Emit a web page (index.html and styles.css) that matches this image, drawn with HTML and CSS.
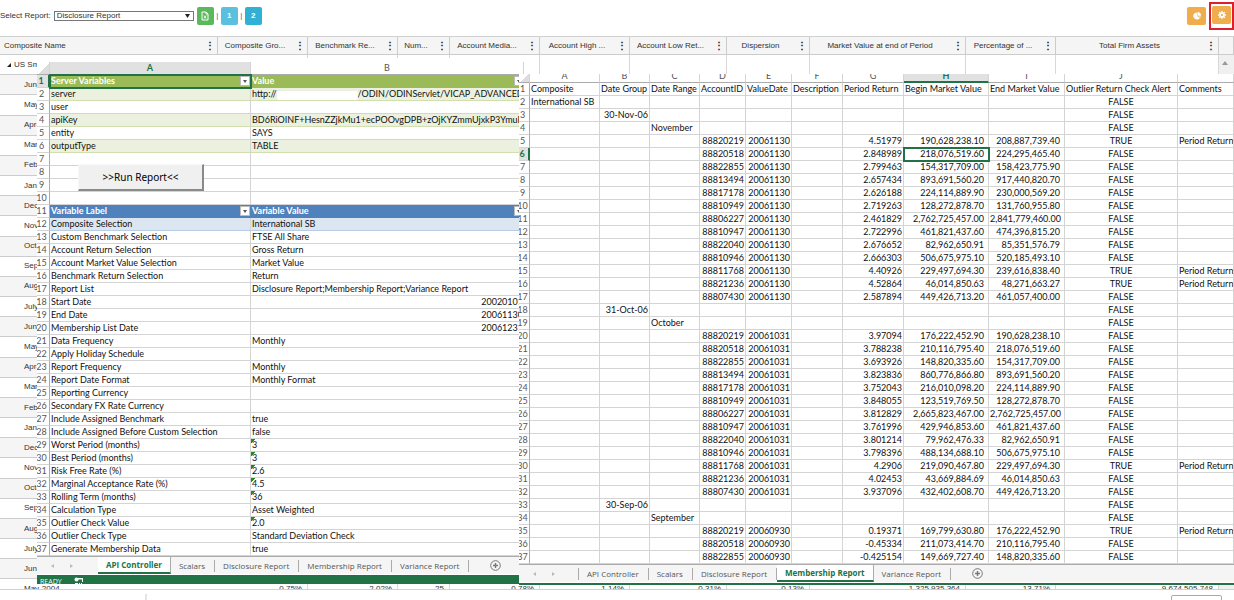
FILE: index.html
```html
<!DOCTYPE html>
<html lang="en">
  <head>
    <meta charset="UTF-8" />
    <meta name="viewport" content="width=device-width, initial-scale=1.0" />
    <title>Disclosure Report</title>
    <link rel="stylesheet" href="styles.css">
  </head>
  <body>
    <header class="toolbar">
      <div class="toolbar-group">
        <label for="report-select">Select Report:</label>
        <select id="report-select" class="report-select">
          <option>Disclosure Report</option>
        </select>
        <button class="button button-green" aria-label="Export to Excel">
          <svg width="8" height="10" viewBox="0 0 8 10" fill="none" stroke="#fff"><path d="M1 1h4l2 2v6H1z" /><path d="M5 1v2h2M3 4.5l2 3M5 4.5l-2 3" stroke-width=".9" /></svg>
        </button>
        <span class="divider">|</span>
        <button class="button button-light">1</button>
        <span class="divider">|</span>
        <button class="button button-blue">2</button>
      </div>
      <div class="toolbar-group">
        <button class="button button-orange" aria-label="Charts">
          <svg width="8" height="8" viewBox="0 0 8 8" fill="#fff"><path d="M3.6 .4A3.6 3.6 0 1 0 6.9 6L4.2 4.3z" /><path d="M4.4 0v3.7H8A3.7 3.7 0 0 0 4.4 0zM4.9 4.5l2.4 1.3a3.6 3.6 0 0 0 .5-1.3z" /></svg>
        </button>
        <span class="highlight">
          <button class="button button-orange" aria-label="Settings">
            <svg width="8" height="8" viewBox="0 0 8 8"><circle cx="4" cy="4" r="2" fill="none" stroke="#fff" stroke-width="1.8" /><path d="M4 0v1.4M4 6.6V8M0 4h1.4M6.6 4H8M1.2 1.2l1 1M5.8 5.8l1 1M6.8 1.2l-1 1M2.2 5.8l-1 1" stroke="#fff" stroke-width="1.3" /></svg>
          </button>
        </span>
      </div>
    </header>

    <main class="report">
      <div class="report-grid">
        <table class="report-table">
          <colgroup>
            <col class="w-name"><col class="w-90"><col class="w-90"><col class="w-num"><col class="w-90"><col class="w-90">
            <col class="w-low"><col class="w-disp"><col class="w-market"><col class="w-90"><col><col class="w-scroll">
          </colgroup>
          <thead>
            <tr id="report-head"></tr>
          </thead>
          <tbody id="report-body"></tbody>
        </table>
      </div>

      <section class="sheet sheet-controller">
        <div class="sheet-scroll">
          <table class="cells controller-table">
            <colgroup><col class="c-index"><col class="c-label"><col class="c-value"><col></colgroup>
            <thead>
              <tr><th class="corner"></th><th class="selected-col">A</th><th>B</th><th></th></tr>
            </thead>
            <tbody id="controller-body"></tbody>
          </table>
          <button class="run-button">&gt;&gt;Run Report&lt;&lt;</button>
        </div>
        <nav class="tabs">
          <span class="tab-arrows"><i class="arrow-left"></i><i class="arrow-right"></i></span>
          <a href="#" class="tab tab-active">API Controller</a>
          <a href="#" class="tab">Scalars</a>
          <a href="#" class="tab">Disclosure Report</a>
          <a href="#" class="tab">Membership Report</a>
          <a href="#" class="tab">Variance Report</a>
          <button class="add-tab" aria-label="New sheet">
            <svg width="11" height="11" viewBox="0 0 11 11" fill="none" stroke="#777"><circle cx="5.5" cy="5.5" r="4.8" /><path d="M5.5 3v5M3 5.5h5" stroke-width="1.4" /></svg>
          </button>
        </nav>
        <div class="status">
          <span>READY</span>
          <svg width="10" height="9" viewBox="0 0 10 9" fill="#fff"><circle cx="2.5" cy="2.5" r="2" /><path d="M4 1h5v4H8V2.4H4zM1 6h3v3H1zM5 6h1v1H5zM7 6h1v1H7z" /></svg>
        </div>
      </section>

      <section class="sheet sheet-membership">
        <div class="sheet-scroll">
          <table class="cells membership-table">
            <colgroup>
              <col class="m-index"><col class="m-a"><col class="m-b"><col class="m-b"><col class="m-d"><col class="m-d">
              <col class="m-f"><col class="m-g"><col class="m-h"><col class="m-i"><col class="m-j"><col>
            </colgroup>
            <thead>
              <tr>
                <th class="corner"></th><th>A</th><th>B</th><th>C</th><th>D</th><th>E</th><th>F</th><th>G</th>
                <th class="selected-col">H</th><th>I</th><th>J</th><th></th>
              </tr>
            </thead>
            <tbody id="membership-body"></tbody>
          </table>
        </div>
        <nav class="tabs">
          <span class="tab-arrows"><i class="arrow-left"></i><i class="arrow-right"></i></span>
          <a href="#" class="tab tab-first">API Controller</a>
          <a href="#" class="tab">Scalars</a>
          <a href="#" class="tab">Disclosure Report</a>
          <a href="#" class="tab tab-active">Membership Report</a>
          <a href="#" class="tab">Variance Report</a>
          <button class="add-tab" aria-label="New sheet">
            <svg width="11" height="11" viewBox="0 0 11 11" fill="none" stroke="#777"><circle cx="5.5" cy="5.5" r="4.8" /><path d="M5.5 3v5M3 5.5h5" stroke-width="1.4" /></svg>
          </button>
        </nav>
      </section>
    </main>

    <footer class="footer">
      <span class="footer-mark"></span>
      <span class="footer-box"></span>
    </footer>

    <script src="script.js"></script>
  </body>
</html>
```
FILE: styles.css
```css
* {
  box-sizing: border-box;
}

body {
  margin: 0;
  height: 100vh;
  overflow: hidden;
  display: flex;
  flex-direction: column;
  background: #fff;
  color: #333;
  font-family: 'Liberation Sans', Arial, sans-serif;
  font-size: 8px;
}

button {
  font-family: inherit;
  padding: 0;
  border: none;
  cursor: pointer;
}

table {
  border-collapse: separate;
  border-spacing: 0;
  table-layout: fixed;
  width: 100%;
}

th,
td {
  padding: 0;
  overflow: hidden;
  white-space: nowrap;
  font-weight: normal;
  text-align: left;
}

/* toolbar */

.toolbar {
  display: flex;
  justify-content: space-between;
  height: 36px;
}

.toolbar-group {
  display: flex;
  align-items: center;
  height: 31px;
  gap: 3px;
}

.report-select {
  appearance: none;
  width: 140px;
  height: 10px;
  padding: 0 2px;
  border: 1px solid #777;
  border-radius: 0;
  font-family: inherit;
  font-size: 8px;
  line-height: 8px;
  color: #333;
  background: #fff url("data:image/svg+xml,%3Csvg xmlns='http://www.w3.org/2000/svg' width='5' height='4'%3E%3Cpath d='M0 0h5L2.5 4z' fill='%23222'/%3E%3C/svg%3E") no-repeat right 3px center;
}

.button {
  display: flex;
  align-items: center;
  justify-content: center;
  width: 17px;
  height: 18px;
  border-radius: 2px;
  color: #fff;
  font-size: 8px;
  font-weight: bold;
}

.button-green {
  background: #5cb85c;
}

.button-light {
  background: #5bc0de;
}

.button-blue {
  background: #31b0d5;
}

.button-orange {
  width: 19px;
  background: #f0ad4e;
}

.divider {
  width: 1px;
  display: flex;
  justify-content: center;
  color: #7a4a7a;
}

.highlight {
  padding: 2px 1px 4px;
  border: 2px solid #e01f2d;
}

/* report grid */

.report {
  position: relative;
  height: 554px;
}

.report-grid {
  height: 100%;
  overflow: hidden;
  border-top: 1px solid #d0d0d0;
  border-bottom: 1px solid #d0d0d0;
}

.report-table {
  height: 563px;
}

.w-name { width: 218px; }
.w-90 { width: 90px; }
.w-num { width: 52px; }
.w-low { width: 97px; }
.w-disp { width: 83px; }
.w-market { width: 156px; }
.w-scroll { width: 15px; }

.report-table th {
  height: 18px;
  background: #f5f5f5;
  border-right: 1px solid #ccc;
  border-bottom: 1px solid #ccc;
}

.head-cell {
  display: flex;
  align-items: center;
}

.head-label {
  flex: 1;
  text-align: center;
}

th:first-child .head-label {
  text-align: left;
  padding-left: 4px;
}

.head-menu {
  width: 15px;
  background: none;
  color: #222;
  font-size: 10px;
  line-height: 12px;
  font-weight: bold;
}

.report-table td {
  height: 20px;
  padding: 0 5px;
  line-height: 10px;
  text-align: right;
  border-right: 1px solid #d8d8d8;
  border-bottom: 1px solid #ccc;
}

.report-table td:first-child {
  padding-left: 24px;
  text-align: left;
  border-right: none;
}

.report-table tr:nth-child(even) td {
  background: #f5f5f5;
}

.report-table tr:first-child td:first-child {
  padding-left: 7px;
}

.report-table td:last-child,
.report-table tr:nth-child(even) td:last-child {
  padding: 0;
  background: #f0f0f0;
  border: none;
}

.group-arrow {
  display: inline-block;
  border-left: 4px solid transparent;
  border-bottom: 4px solid #222;
  margin-right: 3px;
}

.scroll-arrow {
  display: block;
  width: 6px;
  margin: 0 0 5px 3px;
  border: 3px solid transparent;
  border-top: none;
  border-bottom: 4px solid #999;
}

/* spreadsheet windows lying over the grid */

.sheet {
  position: absolute;
  overflow: hidden;
  background: #fff;
  color: #111;
  font-family: Lato, Calibri, sans-serif;
  font-size: 9px;
}

.sheet-controller {
  top: 22px;
  left: 37px;
  width: 498px;
  height: 526px;
  padding-top: 4px;
}

.sheet-membership {
  top: 38px;
  left: 519px;
  right: 0;
  height: 511px;
  border-bottom: 2px solid #217346;
}

.sheet-scroll {
  position: relative;
}

.cells th,
.cells td {
  height: 13px;
  line-height: 12px;
  padding: 0 1px;
  border-right: 1px solid #d4d4d4;
  border-bottom: 1px solid #d4d4d4;
}

.cells th {
  color: #555;
  padding: 0;
  text-align: center;
}

.cells thead th {
  border-bottom-color: #ababab;
}

.cells tbody th {
  border-right-color: #ababab;
}

.cells .corner {
  background: linear-gradient(135deg, transparent 60%, #ddd 60%);
}

.cells .selected-col,
.cells .selected-row {
  background: #e1e1e1;
  color: #217346;
  font-weight: bold;
}

.cells .selected-row {
  border-right: 2px solid #217346;
}

.cells .selected-cell {
  outline: 2px solid #217346;
  outline-offset: -1px;
}

.cells .num {
  text-align: right;
}

.cells .money {
  text-align: right;
  padding-right: 4px;
}

.cells .center {
  text-align: center;
}

.controller-table {
  width: 501px;
  margin-left: -3px;
}

.c-index { width: 16px; }
.c-label { width: 201px; }
.c-value { width: 273px; }

.controller-table td:last-child,
.controller-table th:last-child {
  border-right: none;
}

.controller-table .green-head td {
  background: #9bbb59;
  border-color: #9bbb59;
  color: #fff;
  font-weight: bold;
}

.controller-table .green-band td {
  background: #ebf1de;
  border-bottom-color: #d0deb0;
}

.controller-table .blue-head td {
  background: #4f81bd;
  border-color: #4f81bd;
  color: #fff;
  font-weight: bold;
}

.controller-table .blue-band td {
  background: #dce6f1;
  border-bottom-color: #b8cce4;
}

.head-flex {
  display: flex;
  justify-content: space-between;
  align-items: center;
}

.filter-button {
  display: flex;
  align-items: center;
  justify-content: center;
  width: 10px;
  height: 10px;
  margin-right: -1px;
  background: #fff;
  border: 1px solid #bbb;
}

.filter-button::after {
  content: '';
  border: 2px solid transparent;
  border-top: 3px solid #555;
  border-bottom: none;
}

.text-number {
  background: linear-gradient(135deg, #218a21 3px, transparent 3px);
}

.masked {
  display: inline-block;
  vertical-align: top;
  width: 81px;
  height: 9px;
  margin-top: 3px;
  border-radius: 2px;
  background: #fff;
}

.run-button {
  position: absolute;
  top: 102px;
  left: 41px;
  width: 126px;
  height: 27px;
  background: #f0f0f0;
  border: 1px solid #f8f8f8;
  border-right: 2px solid #8a8a8a;
  border-bottom: 2px solid #8a8a8a;
  font-family: 'Noto Sans', sans-serif;
  font-size: 10px;
  color: #000;
}

/* sheet tabs */

.tabs {
  display: flex;
  align-items: center;
  height: 18px;
  background: #f5f5f5;
  border-top: 1px solid #ababab;
  font-family: 'Open Sans', sans-serif;
  font-size: 8px;
}

.tab-arrows {
  display: flex;
  gap: 16px;
  width: 61px;
  padding-left: 14px;
}

.sheet-membership .tab-arrows {
  width: 59px;
}

.arrow-left,
.arrow-right {
  border: 2px solid transparent;
}

.arrow-left {
  border-left: none;
  border-right: 3px solid #bbb;
}

.arrow-right {
  border-right: none;
  border-left: 3px solid #bbb;
}

.tab {
  height: 12px;
  line-height: 12px;
  padding: 0 9px 0 8px;
  border-right: 1px solid #ababab;
  color: #555;
  text-decoration: none;
  white-space: nowrap;
}

.tab-first {
  border-left: 1px solid #ababab;
}

.tab-active {
  align-self: stretch;
  height: auto;
  padding: 0 8px;
  line-height: 15px;
  background: #fff;
  border-bottom: 2px solid #217346;
  color: #217346;
  font-weight: bold;
}

.add-tab {
  display: flex;
  margin-left: 21px;
  background: none;
}

.status {
  display: flex;
  gap: 12px;
  height: 10px;
  margin-top: 1px;
  padding: 2px 3px 0;
  overflow: hidden;
  background: #217346;
  color: #fff;
  font-family: 'Open Sans', sans-serif;
  font-size: 7px;
  line-height: 9px;
}

.membership-table {
  width: calc(100% + 3px);
  margin-left: -3px;
}

.m-index { width: 14px; }
.m-a { width: 70px; }
.m-b { width: 50px; }
.m-d { width: 46px; }
.m-f { width: 51px; }
.m-g { width: 61px; }
.m-h { width: 85px; }
.m-i { width: 76px; }
.m-j { width: 113px; }

.membership-table thead th {
  height: 9px;
  line-height: 4px;
  vertical-align: top;
}

.membership-table thead .selected-col {
  border-bottom: 2px solid #217346;
}

/* footer */

.footer {
  display: flex;
  justify-content: space-between;
  height: 10px;
  padding: 4px 12px 0 145px;
  overflow: hidden;
}

.footer-mark {
  border-left: 2px solid #e4e4e4;
}

.footer-box {
  width: 51px;
  height: 18px;
  margin-top: 1px;
  border: 1px solid #aaa;
  border-radius: 2px;
}
```
FILE: script.js
```js
const reportHead = document.querySelector('#report-head')
const reportBody = document.querySelector('#report-body')
const controllerBody = document.querySelector('#controller-body')
const membershipBody = document.querySelector('#membership-body')

const headings = [
  'Composite Name', 'Composite Gro...', 'Benchmark Re...', 'Num...', 'Account Media...', 'Account High ...',
  'Account Low Ret...', 'Dispersion', 'Market Value at end of Period', 'Percentage of ...', 'Total Firm Assets',
]

const months = [
  'June-2006', 'May-2006', 'Apr-2006', 'Mar-2006', 'Feb-2006', 'Jan-2006', 'Dec-2005', 'Nov-2005', 'Oct-2005',
  'Sep-2005', 'Aug-2005', 'July-2005', 'June-2005', 'May-2005', 'Apr-2005', 'Mar-2005', 'Feb-2005', 'Jan-2005',
  'Dec-2004', 'Nov-2004', 'Oct-2004', 'Sep-2004', 'Aug-2004', 'July-2004', 'June-2004',
]

const lastRow = ['May-2004', '0.75%', '2.02%', '25', '0.78%', '1.14%', '0.31%', '0.13%', '1,325,935,364', '13.71%', '9,674,505,748', '']

const emptyCells = (count) => '<td></td>'.repeat(count)

reportHead.innerHTML = headings.map((text) => `
  <th><div class="head-cell"><span class="head-label">${text}</span><button class="head-menu" aria-label="Column menu">⋮</button></div></th>
`).join('') + '<th></th>'

reportBody.innerHTML = `<tr><td><i class="group-arrow"></i>US Sm</td>${emptyCells(10)}<td><i class="scroll-arrow"></i></td></tr>`
  + months.map((month) => `<tr><td>${month}</td>${emptyCells(11)}</tr>`).join('')
  + `<tr>${lastRow.map((text) => `<td>${text}</td>`).join('')}</tr>`

// label, value, row class, value class
const controllerRows = [
  ['Server Variables', 'Value', 'green-head'],
  ['server', 'http://<span class="masked"></span>/ODIN/ODINServlet/VICAP_ADVANCED_', 'green-band'],
  ['user', ''],
  ['apiKey', 'BD6RiOINF+HesnZZjkMu1+ecPOOvgDPB+zOjKYZmmUjxkP3YmuPv/I', 'green-band'],
  ['entity', 'SAYS'],
  ['outputType', 'TABLE', 'green-band'],
  ['', ''],
  ['', ''],
  ['', ''],
  ['', ''],
  ['Variable Label', 'Variable Value', 'blue-head'],
  ['Composite Selection', 'International SB', 'blue-band'],
  ['Custom Benchmark Selection', 'FTSE All Share'],
  ['Account Return Selection', 'Gross Return'],
  ['Account Market Value Selection', 'Market Value'],
  ['Benchmark Return Selection', 'Return'],
  ['Report List', 'Disclosure Report;Membership Report;Variance Report'],
  ['Start Date', '20020101', '', 'num'],
  ['End Date', '20061130', '', 'num'],
  ['Membership List Date', '20061231', '', 'num'],
  ['Data Frequency', 'Monthly'],
  ['Apply Holiday Schedule', ''],
  ['Report Frequency', 'Monthly'],
  ['Report Date Format', 'Monthly Format'],
  ['Reporting Currency', ''],
  ['Secondary FX Rate Currency', ''],
  ['Include Assigned Benchmark', 'true'],
  ['Include Assigned Before Custom Selection', 'false'],
  ['Worst Period (months)', '3', '', 'text-number'],
  ['Best Period (months)', '3', '', 'text-number'],
  ['Risk Free Rate (%)', '2.6', '', 'text-number'],
  ['Marginal Acceptance Rate (%)', '4.5', '', 'text-number'],
  ['Rolling Term (months)', '36', '', 'text-number'],
  ['Calculation Type', 'Asset Weighted'],
  ['Outlier Check Value', '2.0', '', 'text-number'],
  ['Outlier Check Type', 'Standard Deviation Check'],
  ['Generate Membership Data', 'true'],
]

const withFilter = (text) => `<div class="head-flex">${text}<button class="filter-button" aria-label="Filter"></button></div>`

controllerBody.innerHTML = controllerRows.map(([label, value, rowClass = '', valueClass = ''], i) => {
  const isHead = rowClass.endsWith('head')
  return `
    <tr class="${rowClass}">
      <th class="${i === 0 ? 'selected-row' : ''}">${i + 1}</th>
      <td class="${i === 0 ? 'selected-cell' : ''}">${isHead ? withFilter(label) : label}</td>
      <td class="${valueClass}">${isHead ? withFilter(value) : value}</td>
    </tr>`
}).join('')

const accounts = [
  '88820219', '88820518', '88822855', '88813494', '88817178', '88810949', '88806227',
  '88810947', '88822040', '88810946', '88811768', '88821236', '88807430',
]

// period return, begin value, end value, outlier alert
const groups = [
  {
    date: '30-Nov-06', month: 'November', valueDate: '20061130',
    rows: [
      ['4.51979', '190,628,238.10', '208,887,739.40', 'TRUE'],
      ['2.848989', '218,076,519.60', '224,295,465.40'],
      ['2.799463', '154,317,709.00', '158,423,775.90'],
      ['2.657434', '893,691,560.20', '917,440,820.70'],
      ['2.626188', '224,114,889.90', '230,000,569.20'],
      ['2.719263', '128,272,878.70', '131,760,955.80'],
      ['2.461829', '2,762,725,457.00', '2,841,779,460.00'],
      ['2.722996', '461,821,437.60', '474,396,815.20'],
      ['2.676652', '82,962,650.91', '85,351,576.79'],
      ['2.666303', '506,675,975.10', '520,185,493.10'],
      ['4.40926', '229,497,694.30', '239,616,838.40', 'TRUE'],
      ['4.52864', '46,014,850.63', '48,271,663.27', 'TRUE'],
      ['2.587894', '449,426,713.20', '461,057,400.00'],
    ],
  },
  {
    date: '31-Oct-06', month: 'October', valueDate: '20061031',
    rows: [
      ['3.97094', '176,222,452.90', '190,628,238.10'],
      ['3.788238', '210,116,795.40', '218,076,519.60'],
      ['3.693926', '148,820,335.60', '154,317,709.00'],
      ['3.823836', '860,776,866.80', '893,691,560.20'],
      ['3.752043', '216,010,098.20', '224,114,889.90'],
      ['3.848055', '123,519,769.50', '128,272,878.70'],
      ['3.812829', '2,665,823,467.00', '2,762,725,457.00'],
      ['3.761996', '429,946,853.60', '461,821,437.60'],
      ['3.801214', '79,962,476.33', '82,962,650.91'],
      ['3.798396', '488,134,688.10', '506,675,975.10'],
      ['4.2906', '219,090,467.80', '229,497,694.30', 'TRUE'],
      ['4.02453', '43,669,884.69', '46,014,850.63'],
      ['3.937096', '432,402,608.70', '449,426,713.20'],
    ],
  },
  {
    date: '30-Sep-06', month: 'September', valueDate: '20060930',
    rows: [
      ['0.19371', '169,799,630.80', '176,222,452.90', 'TRUE'],
      ['-0.45334', '211,073,414.70', '210,116,795.40'],
      ['-0.425154', '149,669,727.40', '148,820,335.60'],
    ],
  },
]

const membershipRows = [
  ['Composite', 'Date Group', 'Date Range', 'AccountID', 'ValueDate', 'Description', 'Period Return', 'Begin Market Value', 'End Market Value', 'Outlier Return Check Alert', 'Comments'],
  ['International SB', '', '', '', '', '', '', '', '', 'FALSE', ''],
]

groups.forEach(({ date, month, valueDate, rows }) => {
  membershipRows.push(['', date, '', '', '', '', '', '', '', 'FALSE', ''])
  membershipRows.push(['', '', month, '', '', '', '', '', '', 'FALSE', ''])
  rows.forEach(([periodReturn, begin, end, alert = 'FALSE'], i) => {
    const comment = alert === 'TRUE' ? 'Period Return' : ''
    membershipRows.push(['', '', '', accounts[i], valueDate, '', periodReturn, begin, end, alert, comment])
  })
})

const cellClasses = ['', 'num', '', 'num', 'num', '', 'num', 'money', 'money', 'center', '']

membershipBody.innerHTML = membershipRows.map((cells, row) => {
  const tds = cells.map((text, col) => {
    const selected = row === 5 && col === 7 ? 'selected-cell' : ''
    return `<td class="${row === 0 ? '' : cellClasses[col]} ${selected}">${text}</td>`
  })
  return `<tr><th class="${row === 5 ? 'selected-row' : ''}">${row + 1}</th>${tds.join('')}</tr>`
}).join('')
```
